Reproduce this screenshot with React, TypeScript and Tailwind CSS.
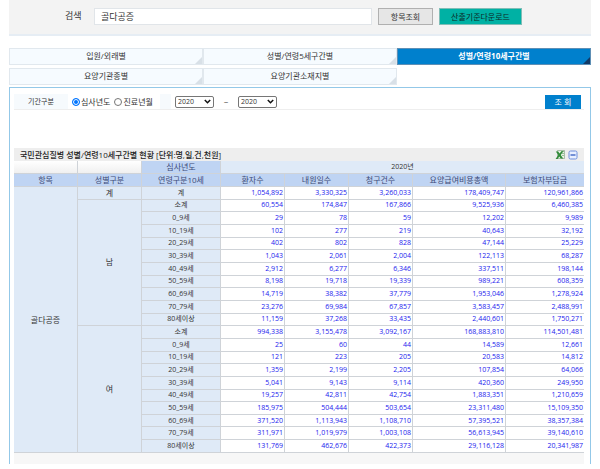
import type { ReactNode } from "react";

const tabs = ["입원/외래별", "성별/연령5세구간별", "성별/연령10세구간별", "요양기관종별", "요양기관소재지별"];

const columns = ["환자수", "내원일수", "청구건수", "요양급여비용총액", "보험자부담금"];

type Row = { age: string; values: string[] };

const groups: { name: string; rows: Row[] }[] = [
  {
    name: "계",
    rows: [{ age: "계", values: ["1,054,892", "3,330,325", "3,260,033", "178,409,747", "120,961,866"] }],
  },
  {
    name: "남",
    rows: [
      { age: "소계", values: ["60,554", "174,847", "167,866", "9,525,936", "6,460,385"] },
      { age: "0_9세", values: ["29", "78", "59", "12,202", "9,989"] },
      { age: "10_19세", values: ["102", "277", "219", "40,643", "32,192"] },
      { age: "20_29세", values: ["402", "802", "828", "47,144", "25,229"] },
      { age: "30_39세", values: ["1,043", "2,061", "2,004", "122,113", "68,287"] },
      { age: "40_49세", values: ["2,912", "6,277", "6,346", "337,511", "198,144"] },
      { age: "50_59세", values: ["8,198", "19,718", "19,339", "989,221", "608,359"] },
      { age: "60_69세", values: ["14,719", "38,382", "37,779", "1,953,046", "1,278,924"] },
      { age: "70_79세", values: ["23,276", "69,984", "67,857", "3,583,457", "2,488,991"] },
      { age: "80세이상", values: ["11,159", "37,268", "33,435", "2,440,601", "1,750,271"] },
    ],
  },
  {
    name: "여",
    rows: [
      { age: "소계", values: ["994,338", "3,155,478", "3,092,167", "168,883,810", "114,501,481"] },
      { age: "0_9세", values: ["25", "60", "44", "14,589", "12,661"] },
      { age: "10_19세", values: ["121", "223", "205", "20,583", "14,812"] },
      { age: "20_29세", values: ["1,359", "2,199", "2,205", "107,854", "64,066"] },
      { age: "30_39세", values: ["5,041", "9,143", "9,114", "420,360", "249,950"] },
      { age: "40_49세", values: ["19,257", "42,811", "42,754", "1,883,351", "1,210,659"] },
      { age: "50_59세", values: ["185,975", "504,444", "503,654", "23,311,480", "15,109,350"] },
      { age: "60_69세", values: ["371,520", "1,113,943", "1,108,710", "57,395,521", "38,357,384"] },
      { age: "70_79세", values: ["311,971", "1,019,979", "1,003,108", "56,613,945", "39,140,610"] },
      { age: "80세이상", values: ["131,769", "462,676", "422,373", "29,116,128", "20,341,987"] },
    ],
  },
];

const rowCount = groups.reduce((sum, group) => sum + group.rows.length, 0);

function SearchBar() {
  return (
    <form className="flex h-9 items-start border-b-2 border-[#e6edf4] bg-[#f3f3f3] pt-2 pl-14 text-[8px] text-[#333]">
      <label htmlFor="keyword" className="w-[29px] text-[9px] leading-4">
        검색
      </label>
      <input
        id="keyword"
        defaultValue="골다공증"
        className="h-[17px] min-w-0 flex-1 border border-[#e1e5e9] bg-white px-1.5 text-[9px]"
      />
      <button type="button" className="ml-1.5 h-[17px] w-[55px] border border-[#b0b0b0] bg-[#e6e6e6]">
        항목조회
      </button>
      <button type="button" className="mr-[69px] ml-1.5 h-[17px] w-[83px] border border-[#7fbdb6] bg-[#00b1a4] text-[#0c2b29]">
        산출기준다운로드
      </button>
    </form>
  );
}

function TabMenu() {
  return (
    <nav className="mt-3 grid grid-cols-3 gap-y-[3px] text-[8px]">
      {tabs.map((tab, index) => {
        const active = index === 2;
        return (
          <a
            key={tab}
            href="#"
            className={
              active
                ? "relative h-[17px] border border-[#5e8fb5] bg-[#0080cd] text-center leading-[13px] font-bold text-white"
                : "relative h-[17px] border border-[#e1e8ee] bg-[#f6fbff] text-center leading-[13px] text-[#333]"
            }
          >
            {tab}
            <svg viewBox="0 0 7 7" className="absolute right-0 bottom-0 size-[7px]" aria-hidden="true">
              <path d="M7 0V7H0Z" fill={active ? "#123a66" : "#d8e0e7"} />
            </svg>
          </a>
        );
      })}
    </nav>
  );
}

function YearSelect({ label }: { label: string }) {
  return (
    <span className="grid items-center">
      <select
        aria-label={label}
        className="col-start-1 row-start-1 h-3 w-[39px] appearance-none rounded-[2px] border border-[#767676] bg-white pl-0.5 text-[7px] leading-[10px] text-[#333]"
      >
        <option>2020</option>
      </select>
      <svg viewBox="0 0 7 5" className="pointer-events-none col-start-1 row-start-1 mr-[3px] h-[5px] w-[7px] justify-self-end" aria-hidden="true">
        <path d="M0.8 0.9L3.5 3.7L6.2 0.9" fill="none" stroke="#111" strokeWidth="1.5" />
      </svg>
    </span>
  );
}

function PeriodRadio({ children, checked }: { children: ReactNode; checked?: boolean }) {
  return (
    <label className="flex items-center gap-px">
      <input
        type="radio"
        name="period"
        defaultChecked={checked}
        className="size-2 appearance-none rounded-full border border-[#767676] bg-white checked:border-[#0075ff] checked:bg-[#0075ff] checked:shadow-[inset_0_0_0_1px_#fff]"
      />
      {children}
    </label>
  );
}

function PeriodFilter() {
  return (
    <form className="flex h-4 items-center border-b border-[#eeeeee] text-[8px] text-[#333]">
      <span className="h-full w-[54px] bg-[#f6fafd] text-center text-[7px] leading-4">기간구분</span>
      <div className="flex w-[92px] gap-1 pl-1">
        <PeriodRadio checked>심사년도</PeriodRadio>
        <PeriodRadio>진료년월</PeriodRadio>
      </div>
      <span className="mr-1 h-full w-[11px] bg-[#f6fafd]" />
      <YearSelect label="시작년도" />
      <span className="w-6 text-center">~</span>
      <YearSelect label="종료년도" />
      <button type="button" className="mr-[3px] ml-auto h-3.5 w-9 bg-[#0080cd] text-[8px] leading-3.5 text-white">
        조 회
      </button>
    </form>
  );
}

function TitleBar() {
  return (
    <div className="mt-[38px] flex h-[13px] items-center bg-[#eeeeee] px-1.5 text-[#222]">
      <h2 className="flex-1 text-[8px] leading-[13px] font-medium">
        국민관심질병 성별/연령10세구간별 현황 [단위:명,일,건,천원]
      </h2>
      <button type="button" aria-label="엑셀" className="mr-[3px]">
        <svg viewBox="0 0 10 10" className="size-2.5">
          <path d="M2.5 0.5H9.5V8.5H2.5Z" fill="#e9f3e6" stroke="#8aa888" strokeWidth="0.7" />
          <path d="M6.5 1.5H9M7 3.5H9M7 5.5H9" stroke="#79aa75" strokeWidth="0.7" />
          <path d="M0.8 1.4H3.2L4.6 3.4L6.4 1.2H8.4L5.7 5L8.2 8.4H5.7L4.3 6.5L2.6 9H0.6L3.3 5Z" fill="#318a38" />
        </svg>
      </button>
      <button type="button" aria-label="접기">
        <svg viewBox="0 0 10 10" className="size-2.5">
          <rect x="1" y="1" width="8" height="8" rx="1.5" fill="#e8efff" stroke="#6f8fdc" />
          <path d="M2.5 5H7.5" stroke="#3f66c4" strokeWidth="1.4" />
        </svg>
      </button>
    </div>
  );
}

function StatsTable() {
  return (
    <table className="h-[292px] w-full table-fixed border-separate border-spacing-0 text-[8px] leading-[10px] text-[#333] [&_td]:border-r [&_td]:border-b [&_td]:border-[#cfd3d8] [&_td:last-child]:border-r-0 [&_th]:border-r [&_th]:border-b [&_th]:border-[#cfd3d8] [&_th]:font-normal [&_th:last-child]:border-r-0">
      <colgroup>
        <col className="w-16" />
        <col className="w-16" />
        <col className="w-[79px]" />
        <col className="w-16" />
        <col className="w-16" />
        <col className="w-16" />
        <col className="w-[93px]" />
        <col className="w-[78px]" />
      </colgroup>
      <thead className="text-[#3c4a78]">
        <tr className="h-[13px]">
          <td className="bg-linear-to-b from-white to-[#f0f0f0]" />
          <td className="bg-linear-to-b from-white to-[#f0f0f0]" />
          <th className="bg-[#bfd4f3]">심사년도</th>
          <th colSpan={5} className="bg-[#dfeaf7] text-[7px] text-[#333]">
            2020년
          </th>
        </tr>
        <tr className="h-[13px] bg-[#bfd4f3]">
          <th>항목</th>
          <th>성별구분</th>
          <th>연령구분10세</th>
          {columns.map((column) => (
            <th key={column}>{column}</th>
          ))}
        </tr>
      </thead>
      <tbody>
        {groups.map((group, groupIndex) =>
          group.rows.map((row, index) => (
            <tr key={group.name + row.age}>
              {groupIndex === 0 && (
                <th rowSpan={rowCount} className="bg-[#dfeaf7]">
                  골다공증
                </th>
              )}
              {index === 0 && (
                <th rowSpan={group.rows.length} className="bg-[#dfeaf7]">
                  {group.name}
                </th>
              )}
              <th className="bg-[#dfeaf7] text-[7px]">{row.age}</th>
              {row.values.map((value, i) => (
                <td key={columns[i]} className="bg-white pr-px text-right text-[7px] text-[#2222ee]">
                  {value}
                </td>
              ))}
            </tr>
          )),
        )}
      </tbody>
    </table>
  );
}

export default function App() {
  return (
    <main className="bg-white px-[9px] pb-1 font-['Open_Sans','Noto_Sans_CJK_KR',sans-serif]">
      <SearchBar />
      <TabMenu />
      <section className="mt-0.5 border-x border-t border-[#93c8e8] pt-1.5 pr-1.5 pl-1">
        <PeriodFilter />
        <TitleBar />
        <StatsTable />
        <div className="h-[11px] bg-[#f7f7f7]" />
      </section>
    </main>
  );
}
